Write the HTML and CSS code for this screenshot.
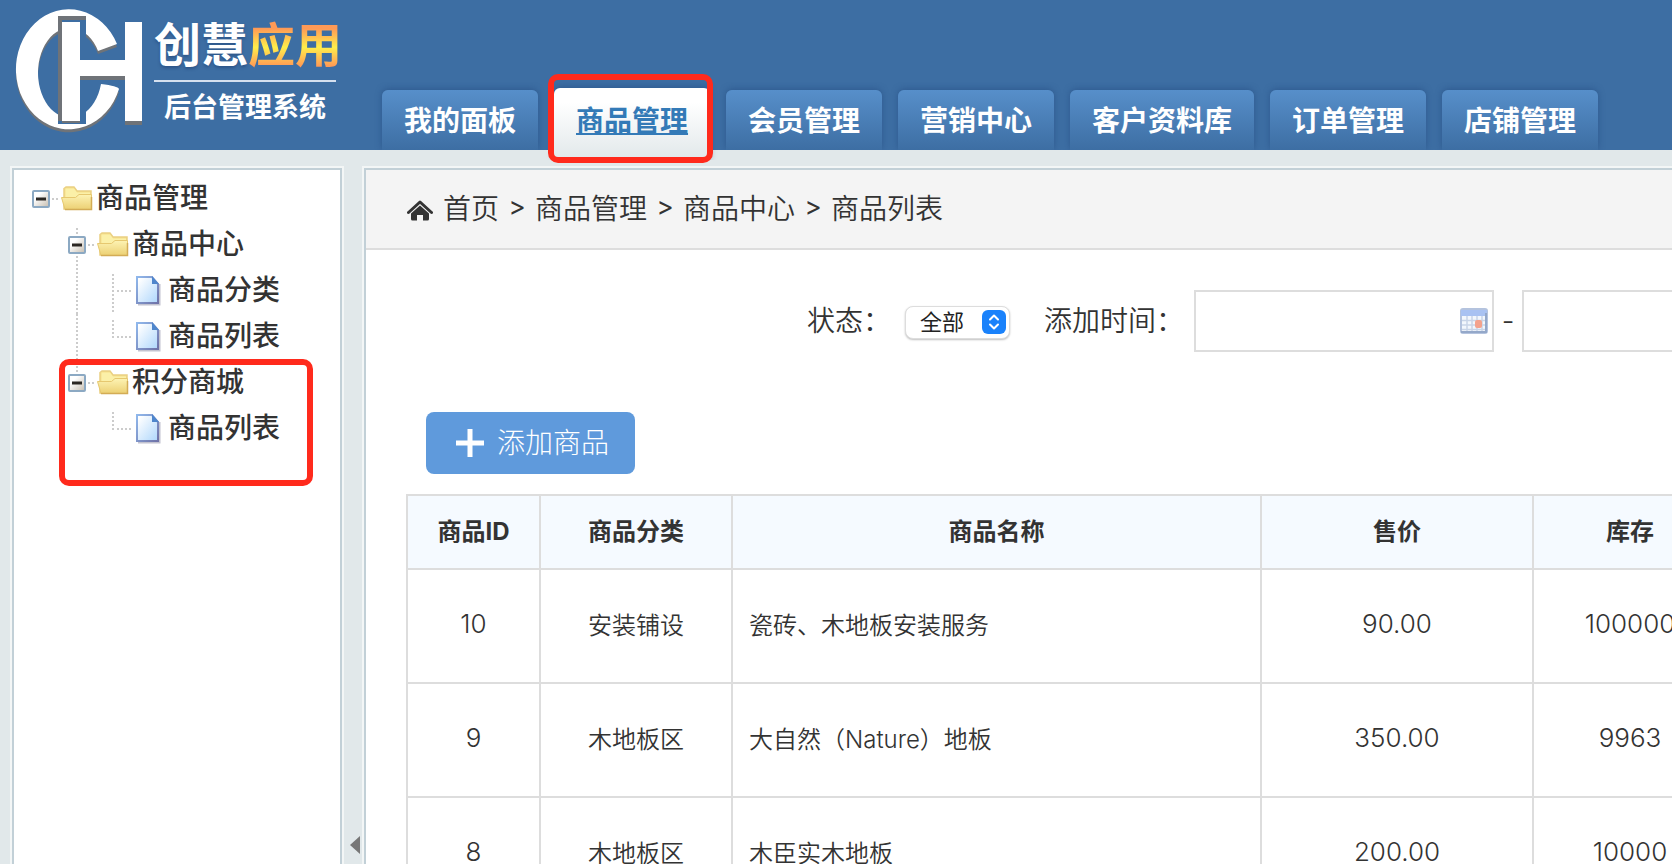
FILE: index.html
```html
<!DOCTYPE html>
<html lang="zh-CN">
<head>
    <meta charset="UTF-8">
    <meta name="viewport" content="width=device-width, initial-scale=1.0">
    <title>商品列表 - 后台管理系统</title>
    <link rel="stylesheet" href="styles.css">
</head>
<body>
    <!-- tree icons -->
    <svg class="sprite" width="0" height="0" aria-hidden="true">
        <defs>
            <linearGradient id="boxFill" x1="0" y1="0" x2="1" y2="1">
                <stop offset="0.3" stop-color="#ffffff"/>
                <stop offset="1" stop-color="#c5bcae"/>
            </linearGradient>
            <linearGradient id="folderFill" x1="0" y1="0" x2="0" y2="1">
                <stop offset="0" stop-color="#fdf3b4"/>
                <stop offset="1" stop-color="#ecd073"/>
            </linearGradient>
            <linearGradient id="pageFill" x1="0" y1="0" x2="1" y2="1">
                <stop offset="0.1" stop-color="#ffffff"/>
                <stop offset="1" stop-color="#add6fc"/>
            </linearGradient>
            <linearGradient id="pageLine" x1="0" y1="0" x2="1" y2="1">
                <stop offset="0" stop-color="#90b8ec"/>
                <stop offset="1" stop-color="#6f73a8"/>
            </linearGradient>
        </defs>
        <symbol id="minus" viewBox="0 0 36 46">
            <rect x="10" y="15" width="16" height="16" rx="1" fill="url(#boxFill)" stroke="#8ca9c3" stroke-width="2"/>
            <path d="M13 23h10" stroke="#2b2723" stroke-width="3"/>
            <path class="dots" d="M29 23h7"/>
        </symbol>
        <symbol id="line-up" viewBox="0 0 36 46"><path class="dots" d="M18 6v8"/></symbol>
        <symbol id="line-down" viewBox="0 0 36 46"><path class="dots" d="M18 34v12"/></symbol>
        <symbol id="line" viewBox="0 0 36 46"><path class="dots" d="M18 0v46"/></symbol>
        <symbol id="join" viewBox="0 0 36 46"><path class="dots" d="M18 6v40M22 23h14"/></symbol>
        <symbol id="corner" viewBox="0 0 36 46"><path class="dots" d="M18 6v18M22 23h14"/></symbol>
        <symbol id="folder" viewBox="0 0 36 46">
            <path d="M5 33V12.500l2-1.500h8l3 4h14v18z" fill="#f6e08a" stroke="#ead083" stroke-width="1.500"/>
            <path d="M6.500 12.500h8.500l3 4h13v8H6.500z" fill="#fbf0a8"/>
            <path d="M2.500 21.500h14l3.500-3h12.500V33.500H6z" fill="url(#folderFill)" stroke="#e6c870"/>
            <path d="M6 33.500h26.500V21" fill="none" stroke="#d3ac55" stroke-width="1.500"/>
        </symbol>
        <symbol id="page" viewBox="0 0 36 46">
            <path d="M7 36.500h21.500V16" fill="none" stroke="#9b9bb0" stroke-width="2" opacity="0.600"/>
            <path d="M6 9h15l6 7v19H6z" fill="url(#pageFill)" stroke="url(#pageLine)" stroke-width="2"/>
            <path d="M21 8v8h7z" fill="#4f86cc"/>
        </symbol>
    </svg>

    <header class="header">
        <div class="logo">
            <svg class="logo-mark" viewBox="0 0 146 150" width="146" height="150" aria-hidden="true">
                <g fill="#6f7378">
                    <path d="M117 47A53 60 0 1 0 119 92L101 87A32 45 0 1 1 98 54Z"/>
                    <path d="M125 24h17v101h-17zM79 64h46v16h-46z"/>
                </g>
                <path d="M117 44A53 60 0 1 0 119 89Q118 86 101 84A32 45 0 1 1 98 51Z" fill="#fff"/>
                <path d="M58 16h28v108h-28z" fill="#3d6ea3"/>
                <path d="M58 16h28v4h-24v101h-4zM62 119h18v4h-18zM80 76h6v4h-6z" fill="#6f7378"/>
                <path d="M62 22h18v38h45v-38h17v99h-17v-45h-45v45h-18z" fill="#fff"/>
            </svg>
            <div class="logo-text">
                <div class="logo-name">创慧<span class="gold">应用</span></div>
                <div class="logo-sub">后台管理系统</div>
            </div>
        </div>
        <nav>
            <ul class="tabs">
                <li><a href="#">我的面板</a></li>
                <li class="active"><a href="#">商品管理</a></li>
                <li><a href="#">会员管理</a></li>
                <li><a href="#">营销中心</a></li>
                <li><a href="#">客户资料库</a></li>
                <li><a href="#">订单管理</a></li>
                <li><a href="#">店铺管理</a></li>
            </ul>
        </nav>
    </header>

    <div class="layout">
        <aside class="sidebar">
            <ul class="tree">
                <li>
                    <a class="node" href="#">
                        <svg><use href="#minus"/></svg>
                        <svg><use href="#folder"/></svg>
                        <span>商品管理</span>
                    </a>
                    <ul>
                        <li>
                            <a class="node" href="#">
                                <i class="indent"></i>
                                <svg><use href="#line-up"/><use href="#minus"/><use href="#line-down"/></svg>
                                <svg><use href="#folder"/></svg>
                                <span>商品中心</span>
                            </a>
                            <ul>
                                <li>
                                    <a class="node" href="#">
                                        <i class="indent"></i>
                                        <svg><use href="#line"/></svg>
                                        <svg><use href="#join"/></svg>
                                        <svg><use href="#page"/></svg>
                                        <span>商品分类</span>
                                    </a>
                                </li>
                                <li>
                                    <a class="node" href="#">
                                        <i class="indent"></i>
                                        <svg><use href="#line"/></svg>
                                        <svg><use href="#corner"/></svg>
                                        <svg><use href="#page"/></svg>
                                        <span>商品列表</span>
                                    </a>
                                </li>
                            </ul>
                        </li>
                        <li class="marked">
                            <a class="node" href="#">
                                <i class="indent"></i>
                                <svg><use href="#line-up"/><use href="#minus"/></svg>
                                <svg><use href="#folder"/></svg>
                                <span>积分商城</span>
                            </a>
                            <ul>
                                <li>
                                    <a class="node" href="#">
                                        <i class="indent"></i>
                                        <i class="indent"></i>
                                        <svg><use href="#corner"/></svg>
                                        <svg><use href="#page"/></svg>
                                        <span>商品列表</span>
                                    </a>
                                </li>
                            </ul>
                        </li>
                    </ul>
                </li>
            </ul>
        </aside>

        <div class="splitter">
            <button type="button" class="collapse" aria-label="收起菜单"></button>
        </div>

        <main class="main">
            <div class="crumbs">
                <svg class="home" viewBox="0 0 26 22" width="26" height="22" aria-hidden="true">
                    <path d="M1.500 13.500L13 3l11.500 10.500" fill="none" stroke="#333" stroke-width="3" stroke-linecap="round" stroke-linejoin="round"/>
                    <path d="M4 14.500l9-8 9 8V20q0 1.500-1.500 1.500H16V16h-6v5.500H5.500Q4 21.500 4 20z" fill="#333"/>
                </svg>
                <a href="#">首页</a>
                <span class="sep">&gt;</span>
                <a href="#">商品管理</a>
                <span class="sep">&gt;</span>
                <a href="#">商品中心</a>
                <span class="sep">&gt;</span>
                <a href="#">商品列表</a>
            </div>

            <form class="filter">
                <label for="status">状态：</label>
                <div class="select-box">
                    <select id="status">
                        <option>全部</option>
                    </select>
                    <svg class="knob" viewBox="0 0 24 24" width="24" height="24" aria-hidden="true">
                        <rect width="24" height="24" rx="6" fill="#1a82fb"/>
                        <path d="M8 9.500l4-4 4 4M8 14.500l4 4 4-4" fill="none" stroke="#fff" stroke-width="2" stroke-linecap="round" stroke-linejoin="round"/>
                    </svg>
                </div>
                <label class="time-label" for="startTime">添加时间：</label>
                <div class="date-box">
                    <input type="text" id="startTime">
                    <svg class="calendar" viewBox="0 0 28 26" width="28" height="26" aria-hidden="true">
                        <rect x="1" y="1" width="26" height="24" rx="2" fill="#f3f7fd" stroke="#b4c3de" stroke-width="2"/>
                        <path d="M1 2h26v6H1z" fill="#a9c2f2"/>
                        <path d="M2 12.500h24M2 17h24M2 21.500h24M7 8v16M12 8v16M17 8v16M22 8v16" stroke="#c9d5e8" stroke-width="1.500"/>
                        <path d="M1 24h26M26 5v19" stroke="#94a8c9" stroke-width="2"/>
                        <rect x="15" y="12" width="7" height="8" rx="2" fill="#f4a28d"/>
                    </svg>
                </div>
                <span class="dash">-</span>
                <div class="date-box">
                    <input type="text" id="endTime" aria-label="结束时间">
                </div>
            </form>

            <button type="button" class="add-btn">
                <svg viewBox="0 0 28 28" width="28" height="28" aria-hidden="true">
                    <path d="M14 0v28M0 14h28" stroke="#fff" stroke-width="5"/>
                </svg>
                <span>添加商品</span>
            </button>

            <table class="goods">
                <colgroup>
                    <col class="col-id">
                    <col class="col-cate">
                    <col class="col-name">
                    <col class="col-price">
                    <col class="col-stock">
                </colgroup>
                <thead>
                    <tr>
                        <th>商品ID</th>
                        <th>商品分类</th>
                        <th>商品名称</th>
                        <th>售价</th>
                        <th>库存</th>
                    </tr>
                </thead>
                <tbody>
                    <tr>
                        <td class="num">10</td>
                        <td>安装铺设</td>
                        <td class="name">瓷砖、木地板安装服务</td>
                        <td class="num">90.00</td>
                        <td class="num">100000</td>
                    </tr>
                    <tr>
                        <td class="num">9</td>
                        <td>木地板区</td>
                        <td class="name">大自然（Nature）地板</td>
                        <td class="num">350.00</td>
                        <td class="num">9963</td>
                    </tr>
                    <tr>
                        <td class="num">8</td>
                        <td>木地板区</td>
                        <td class="name">木臣实木地板</td>
                        <td class="num">200.00</td>
                        <td class="num">10000</td>
                    </tr>
                </tbody>
            </table>
        </main>
    </div>
</body>
</html>
```
FILE: styles.css
```css
* {
    box-sizing: border-box;
}
body {
    margin: 0;
    height: 100vh;
    display: flex;
    flex-direction: column;
    overflow: hidden;
    background: #e1e8ea;
    color: #333;
    font-family: Inter, "Noto Sans CJK SC", sans-serif;
    font-size: 28px;
    font-weight: 350;
}
a {
    color: inherit;
    text-decoration: none;
}
ul {
    list-style: none;
    margin: 0;
    padding: 0;
}
.sprite {
    position: absolute;
}
.dots {
    fill: none;
    stroke: #ccc;
    stroke-width: 2;
    stroke-dasharray: 2 2;
}

/* header */
.header {
    position: relative;
    z-index: 1;
    flex: none;
    height: 150px;
    display: flex;
    align-items: flex-end;
    background: #3d6ea3;
}
.logo {
    flex: none;
    width: 382px;
    height: 150px;
    display: flex;
    color: #fff;
    font-weight: 700;
}
.logo-text {
    padding: 16px 0 0 8px;
}
.logo-name {
    width: 182px;
    height: 66px;
    border-bottom: 2px solid #d5e0ef;
    font-size: 47px;
    line-height: 58px;
    white-space: nowrap;
    text-shadow: 0 2px 3px rgba(30,60,110,0.5);
}
.gold {
    background: linear-gradient(#ff9a56 22%, #ffee4a 55%, #ff9a56 88%);
    -webkit-background-clip: text;
    background-clip: text;
    color: transparent;
    text-shadow: none;
}
.logo-sub {
    padding: 6px 10px;
    font-size: 27px;
    line-height: 40px;
}
.tabs {
    display: flex;
    align-items: flex-end;
    gap: 16px;
}
.tabs li {
    position: relative;
    height: 60px;
}
.tabs a {
    display: block;
    height: 60px;
    padding: 0 22px;
    border-radius: 6px 6px 0 0;
    background: linear-gradient(#578fca, #3d6ea3);
    box-shadow: 0 -1px 6px rgba(35,75,130,0.6);
    clip-path: inset(-8px -8px 0);
    color: #fff;
    font-weight: 700;
    line-height: 62px;
    white-space: nowrap;
}
.tabs .active a {
    height: 72px;
    margin-top: -2px;
    background: linear-gradient(#fff 20%, #e1e8ea);
    color: #337ab7;
    line-height: 66px;
    text-decoration: underline;
}
.tabs .active::after,
.marked::after {
    content: "";
    position: absolute;
    border: 6px solid #ff2a1c;
    border-radius: 10px;
    pointer-events: none;
}
.tabs .active::after {
    top: -16px;
    right: -3px;
    bottom: -13px;
    left: -6px;
}

/* layout */
.layout {
    flex: 1;
    min-height: 0;
    display: flex;
    padding: 18px 0 0 12px;
}
.sidebar,
.main {
    border: 2px solid #c2d0d7;
    border-bottom: 0;
    background: #fff;
    box-shadow: 0 0 0 2px #f3f6f6;
}
.sidebar {
    flex: none;
    width: 330px;
    padding: 6px 9px;
}
.node {
    display: flex;
    align-items: center;
    height: 46px;
    font-weight: 500;
    line-height: 44px;
    white-space: nowrap;
}
.node svg,
.indent {
    flex: none;
    width: 36px;
    height: 46px;
}
.node span {
    padding: 0 0 2px 1px;
}
.marked {
    position: relative;
}
.marked::after {
    top: -1px;
    right: 18px;
    bottom: -34px;
    left: 36px;
}
.splitter {
    flex: none;
    width: 22px;
    display: flex;
    align-items: flex-end;
    padding: 0 0 10px 8px;
}
.collapse {
    width: 10px;
    height: 18px;
    padding: 0;
    border: 0;
    background: #777;
    clip-path: polygon(100% 0, 100% 100%, 0 50%);
    cursor: pointer;
}

/* main */
.main {
    flex: 1;
    min-width: 0;
    border-right: 0;
    overflow: hidden;
}
.crumbs {
    display: flex;
    align-items: center;
    height: 80px;
    padding: 0 41px 5px;
    border-bottom: 2px solid #ddd;
    background: #f4f4f4;
    white-space: nowrap;
}
.home {
    margin: 6px 10px 0 0;
}
.sep {
    width: 36px;
    text-align: center;
    font-size: 26px;
    font-weight: 400;
}
.filter {
    display: flex;
    align-items: center;
    padding: 40px 0 0 441px;
    white-space: nowrap;
}
.filter > * {
    flex: none;
}
.filter label {
    padding-bottom: 4px;
}
.select-box {
    position: relative;
    display: flex;
    margin: 2px 34px 0 14px;
}
.select-box select {
    appearance: none;
    width: 105px;
    height: 33px;
    padding: 0 0 0 14px;
    border: 1px solid #ddd;
    border-radius: 8px;
    background: #fff;
    box-shadow: 0 1px 2px rgba(0,0,0,0.25);
    color: #222;
    font: 400 22px/30px Inter, "Noto Sans CJK SC", sans-serif;
}
.knob {
    position: absolute;
    top: 4px;
    right: 4px;
    pointer-events: none;
}
.time-label {
    margin-right: 10px;
}
.date-box {
    position: relative;
}
.date-box input {
    display: block;
    width: 300px;
    height: 62px;
    padding: 0 40px 0 12px;
    border: 2px solid #ddd;
    background: #fff;
    font: inherit;
}
.calendar {
    position: absolute;
    top: 18px;
    right: 6px;
}
.dash {
    width: 28px;
    text-align: center;
}
.add-btn {
    display: flex;
    align-items: center;
    gap: 13px;
    height: 62px;
    margin: 60px 0 20px 60px;
    padding: 0 26px 0 30px;
    border: 0;
    border-radius: 8px;
    background: #5f9adc;
    color: #fff;
    font: inherit;
    font-weight: 300;
    cursor: pointer;
}
.add-btn span {
    padding-bottom: 4px;
}
.goods {
    width: 1321px;
    margin-left: 40px;
    border-collapse: collapse;
    table-layout: fixed;
    font-size: 24px;
}
.goods th,
.goods td {
    height: 114px;
    padding: 0 16px 5px;
    border: 2px solid #ddd;
    text-align: center;
    white-space: nowrap;
}
.goods th {
    height: 74px;
    background: #f5faff;
    font-weight: 700;
}
.goods .name {
    text-align: left;
}
.goods .num {
    font-size: 26px;
    font-weight: 300;
}
.col-id {
    width: 133px;
}
.col-cate {
    width: 192px;
}
.col-name {
    width: 529px;
}
.col-price {
    width: 272px;
}
.col-stock {
    width: 194px;
}
```
